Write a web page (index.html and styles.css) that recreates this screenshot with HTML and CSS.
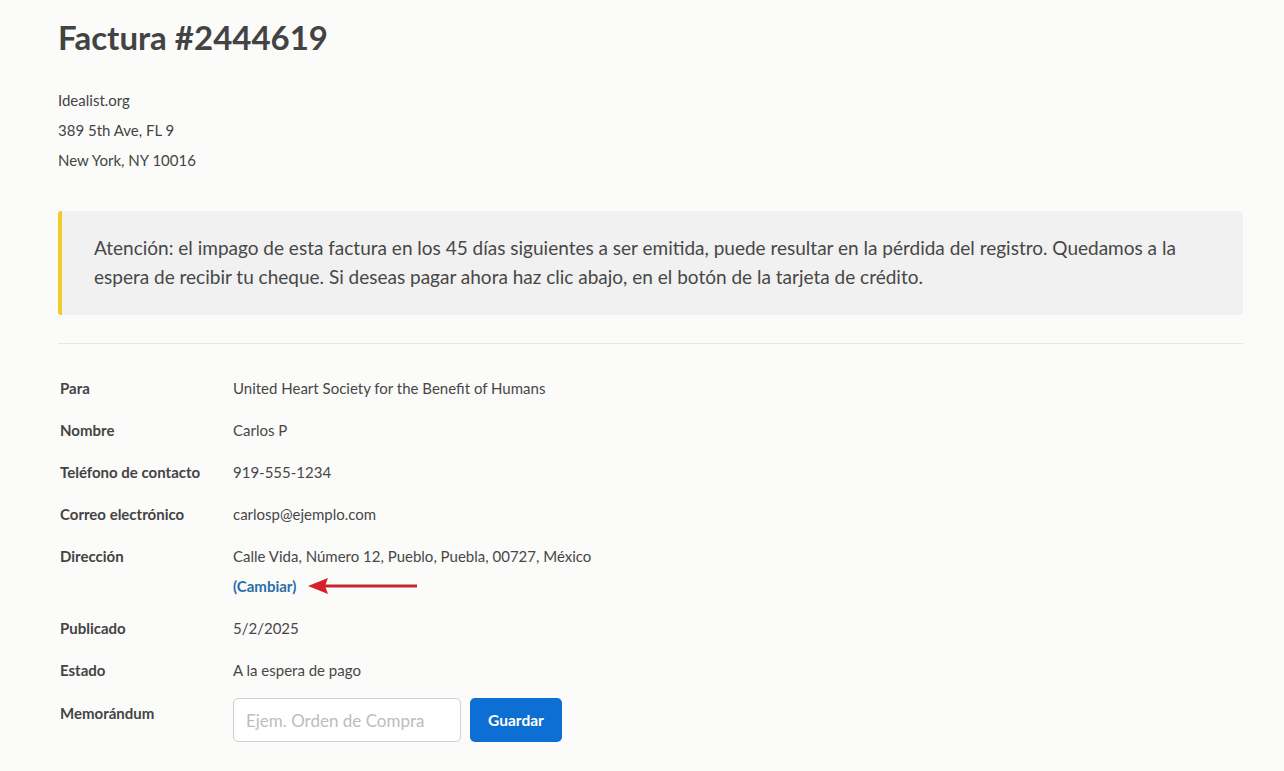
FILE: index.html
```html
<!DOCTYPE html>
<html lang="es">
	<head>
		<title>Factura #2444619</title>
		<meta charset="UTF-8">
		<link rel="stylesheet" href="styles.css">
	</head>
	<body>
		<div class="invoice">
			<h1 class="invoiceTitle">Factura #2444619</h1>

			<div class="sender">
				<p>Idealist.org</p>
				<p>389 5th Ave, FL 9</p>
				<p>New York, NY 10016</p>
			</div>

			<div class="notice">
				<p>Atención: el impago de esta factura en los 45 días siguientes a ser emitida, puede resultar en la pérdida del registro. Quedamos a la espera de recibir tu cheque. Si deseas pagar ahora haz clic abajo, en el botón de la tarjeta de crédito.</p>
			</div>

			<hr class="divider">

			<div class="details">
				<div class="detailLabel">Para</div>
				<div class="detailValue">United Heart Society for the Benefit of Humans</div>

				<div class="detailLabel">Nombre</div>
				<div class="detailValue">Carlos P</div>

				<div class="detailLabel">Teléfono de contacto</div>
				<div class="detailValue">919-555-1234</div>

				<div class="detailLabel">Correo electrónico</div>
				<div class="detailValue">carlosp@ejemplo.com</div>

				<div class="detailLabel">Dirección</div>
				<div class="detailValue">
					Calle Vida, Número 12, Pueblo, Puebla, 00727, México
					<div class="changeLine">
						<a href="#" class="changeLink">(Cambiar)</a>
						<svg class="arrow" width="110" height="18" viewBox="0 0 110 18">
							<path d="M16 7.5 H109 V10.5 H16 Z" fill="#c8252b"/>
							<path d="M0 9 L20 1 L17 9 L20 17 Z" fill="#d3222a"/>
						</svg>
					</div>
				</div>

				<div class="detailLabel">Publicado</div>
				<div class="detailValue">5/2/2025</div>

				<div class="detailLabel">Estado</div>
				<div class="detailValue">A la espera de pago</div>

				<div class="detailLabel memoLabel">Memorándum</div>
				<div class="detailValue memoRow">
					<input class="memoField" type="text" placeholder="Ejem. Orden de Compra">
					<button class="buttonSave" type="button">Guardar</button>
				</div>
			</div>
		</div>
	</body>
</html>
```

FILE: styles.css
```css
body {
	margin : 0;
	font-family : "Source Sans Pro", Lato, "Noto Sans", sans-serif;
	background-color : #fbfbfa;
	color : #444;
}
p {
	margin : 0;
	padding : 0;
}

.invoice {
	padding : 13px 41px 30px 58px;
}
.invoiceTitle {
	margin : 0;
	font-size : 33px;
	font-weight : 700;
	color : #434343;
	line-height : 48px;
}
.sender {
	margin-top : 24px;
	font-size : 15px;
	line-height : 30px;
	color : #444;
}

.notice {
	margin-top : 36px;
	background-color : #f1f1f1;
	border-left : 4px solid #efcb2b;
	border-radius : 3px;
	padding : 22px 50px 24px 32px;
	font-size : 19px;
	line-height : 29px;
	color : #474747;
}

.divider {
	margin : 28px 0 0 0;
	border : none;
	border-top : 1px solid #e6e6e6;
}

.details {
	display : grid;
	grid-template-columns : 173px 1fr;
	row-gap : 20px;
	padding : 33px 0 0 2px;
	font-size : 15px;
	line-height : 22px;
}
.detailLabel {
	font-weight : 700;
	color : #444;
}
.detailValue {
	color : #474747;
}
.changeLine {
	display : flex;
	align-items : center;
	margin-top : 8px;
}
.changeLink {
	color : #2a6ea6;
	font-weight : 700;
	text-decoration : none;
}
.arrow {
	margin-left : 12px;
}

.memoLabel {
	padding-top : 1px;
}
.memoRow {
	display : flex;
	gap : 9px;
	margin-top : -3px;
}
.memoField {
	width : 228px;
	height : 44px;
	box-sizing : border-box;
	border : 1px solid #cfcfcf;
	border-radius : 5px;
	padding : 0 12px;
	font-family : inherit;
	font-size : 17px;
	background-color : white;
	color : #444;
}
.memoField::placeholder {
	color : #bdbdbd;
}
.buttonSave {
	width : 92px;
	height : 44px;
	border : none;
	border-radius : 5px;
	background-color : #0d6fd3;
	color : white;
	font-family : inherit;
	font-size : 15.5px;
	font-weight : 700;
	cursor : pointer;
}
```
